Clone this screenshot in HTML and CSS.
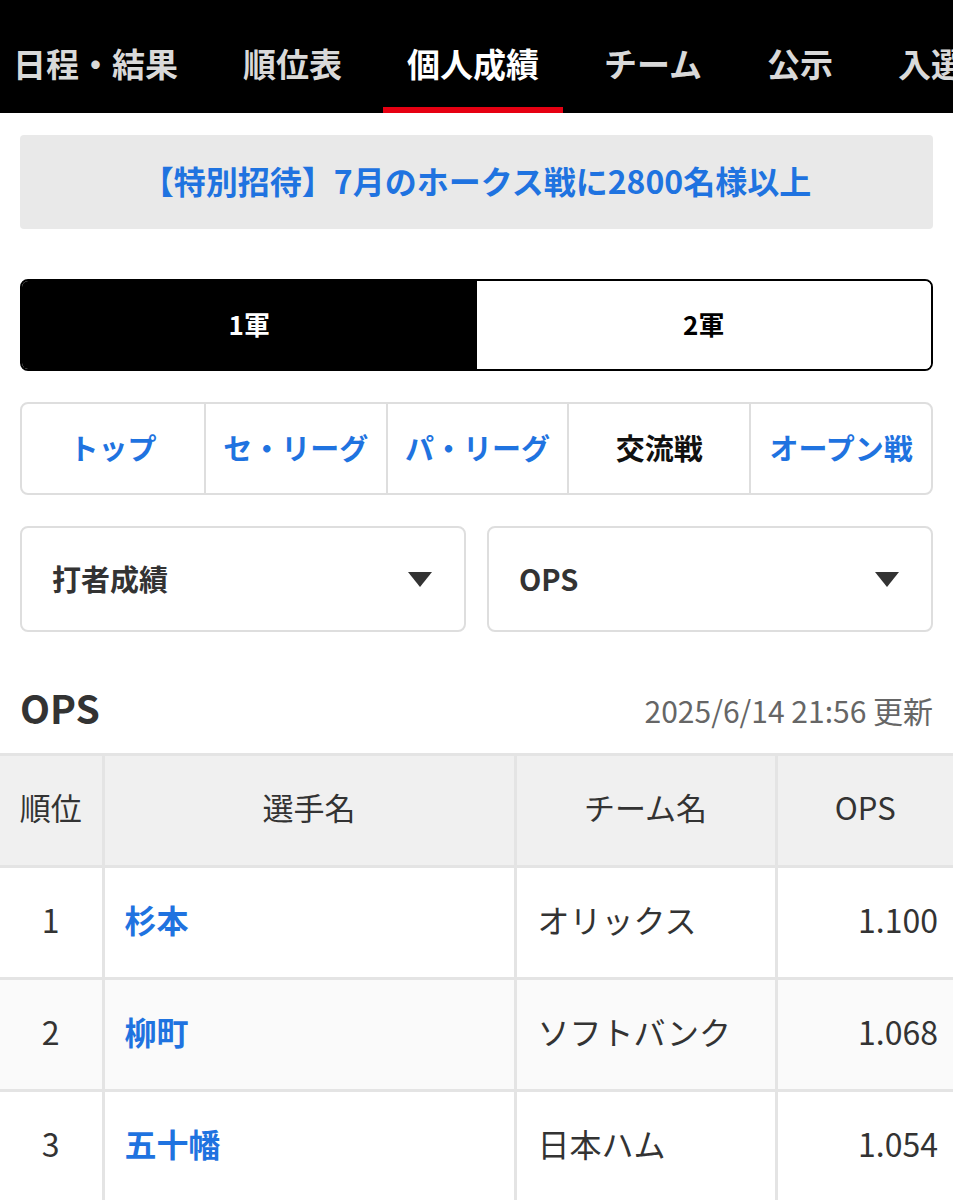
FILE: index.html
```html
<!DOCTYPE html>
<html lang="ja">
<head>
<meta charset="utf-8">
<title>個人成績 OPS</title>
<link rel="stylesheet" href="styles.css">
</head>
<body>
<nav class="gnav">
  <div class="gnav-track">
    <a class="gnav-item">日程・結果</a>
    <a class="gnav-item">順位表</a>
    <a class="gnav-item is-active">個人成績</a>
    <a class="gnav-item">チーム</a>
    <a class="gnav-item">公示</a>
    <a class="gnav-item">入選</a>
  </div>
</nav>

<main class="content">
  <div class="banner"><a class="banner-link">【特別招待】7月のホークス戦に2800名様以上</a></div>

  <div class="squad-tabs">
    <div class="squad-tab is-active">1軍</div>
    <div class="squad-tab">2軍</div>
  </div>

  <div class="league-tabs">
    <div class="league-tab">トップ</div>
    <div class="league-tab">セ・リーグ</div>
    <div class="league-tab">パ・リーグ</div>
    <div class="league-tab is-current">交流戦</div>
    <div class="league-tab">オープン戦</div>
  </div>

  <div class="selects">
    <div class="select"><span>打者成績</span><span class="caret"></span></div>
    <div class="select"><span>OPS</span><span class="caret"></span></div>
  </div>

  <div class="section-head">
    <h2 class="section-title">OPS</h2>
    <span class="updated">2025/6/14 21:56 更新</span>
  </div>
</main>

<table class="stats">
  <colgroup>
    <col class="c-rank"><col class="c-name"><col class="c-team"><col class="c-val">
  </colgroup>
  <thead>
    <tr><th>順位</th><th>選手名</th><th>チーム名</th><th>OPS</th></tr>
  </thead>
  <tbody>
    <tr><td class="rank">1</td><td class="name">杉本</td><td class="team">オリックス</td><td class="val">1.100</td></tr>
    <tr><td class="rank">2</td><td class="name">柳町</td><td class="team">ソフトバンク</td><td class="val">1.068</td></tr>
    <tr><td class="rank">3</td><td class="name">五十幡</td><td class="team">日本ハム</td><td class="val">1.054</td></tr>
  </tbody>
</table>
</body>
</html>
```

FILE: styles.css
```css
* { box-sizing: border-box; }
html, body { margin: 0; padding: 0; background: #fff; }
body {
  width: 953px;
  overflow: hidden;
  font-family: "Noto Sans CJK JP", "Noto Sans", sans-serif;
  color: #333;
}

.gnav {
  background: #000;
  height: 113px;
  overflow: hidden;
}
.gnav-track {
  display: flex;
  gap: 17px;
  margin-left: -11px;
  height: 100%;
  white-space: nowrap;
}
.gnav-item {
  display: flex;
  align-items: center;
  flex-shrink: 0;
  padding: 18px 24px 0;
  font-size: 33px;
  font-weight: 700;
  color: #d9d9d9;
  border-bottom: 6px solid transparent;
}
.gnav-item.is-active {
  color: #fff;
  border-bottom-color: #e60012;
}

.content { padding: 0 20px; }

.banner {
  margin-top: 22px;
  height: 94px;
  background: #e9e9e9;
  border-radius: 4px;
  display: flex;
  align-items: center;
  justify-content: center;
  padding-bottom: 4px;
}
.banner-link {
  color: #1f73e0;
  font-size: 32px;
  font-weight: 700;
}

.squad-tabs {
  margin-top: 50px;
  height: 92px;
  border: 2px solid #000;
  border-radius: 8px;
  overflow: hidden;
  display: grid;
  grid-template-columns: 1fr 1fr;
}
.squad-tab {
  display: flex;
  align-items: center;
  justify-content: center;
  padding-bottom: 3px;
  font-size: 26px;
  font-weight: 700;
  color: #000;
  background: #fff;
}
.squad-tab.is-active { background: #000; color: #fff; }

.league-tabs {
  margin-top: 31px;
  height: 93px;
  border: 2px solid #dedede;
  border-radius: 8px;
  display: grid;
  grid-template-columns: repeat(5, 1fr);
}
.league-tab {
  display: flex;
  align-items: center;
  justify-content: center;
  padding-bottom: 3px;
  font-size: 29px;
  font-weight: 700;
  color: #1f73e0;
  border-left: 2px solid #dedede;
  white-space: nowrap;
}
.league-tab:first-child { border-left: none; }
.league-tab.is-current { color: #111; }

.selects {
  margin-top: 31px;
  display: grid;
  grid-template-columns: 1fr 1fr;
  gap: 21px;
}
.select {
  height: 106px;
  border: 2px solid #dedede;
  border-radius: 8px;
  display: flex;
  align-items: center;
  justify-content: space-between;
  padding: 0 32px 3px 30px;
  font-size: 29px;
  font-weight: 700;
  color: #333;
}
.caret {
  width: 0;
  height: 0;
  margin-top: 3px;
  border-left: 12px solid transparent;
  border-right: 12px solid transparent;
  border-top: 15px solid #333;
}

.section-head {
  margin-top: 48px;
  height: 58px;
  display: flex;
  align-items: center;
  justify-content: space-between;
}
.section-title {
  margin: 0;
  font-size: 39px;
  font-weight: 700;
  color: #333;
  line-height: 1;
  padding-bottom: 4px;
}
.updated {
  font-size: 30px;
  color: #666;
  line-height: 1;
  padding-top: 2px;
}

.stats {
  margin-top: 15px;
  width: 953px;
  border-collapse: collapse;
  table-layout: fixed;
  font-size: 31px;
}
.c-rank { width: 103px; }
.c-name { width: 412px; }
.c-team { width: 261px; }
.c-val { width: 177px; }
.stats th, .stats td {
  border: 3px solid #e4e4e4;
  height: 112px;
  padding: 0 0 8px;
}
.stats tr > :first-child { border-left: none; }
.stats tr > :last-child { border-right: none; }
.stats th {
  background: #f0f0f0;
  font-weight: 400;
  color: #333;
  text-align: center;
}
.stats tbody tr:nth-child(2) td { background: #fafafa; }
.stats td { color: #333; }
.stats .rank { text-align: center; font-size: 32px; }
.stats .name {
  padding-left: 20px;
  color: #1f73e0;
  font-weight: 700;
  font-size: 32px;
}
.stats .team { padding-left: 21px; font-size: 32px; }
.stats .val { text-align: right; padding-right: 15px; font-size: 32px; }
```
